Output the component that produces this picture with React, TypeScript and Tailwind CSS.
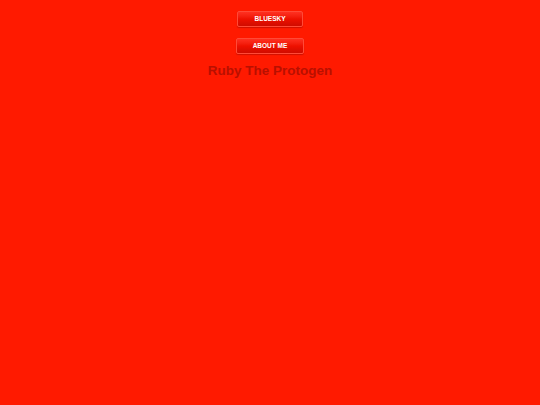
export default function App() {
  const btn =
    "h-[16px] px-[16px] flex items-center justify-center rounded-[2px] border border-[#ff4a38] bg-gradient-to-b from-[#ff3020] via-[#ee1000] to-[#d00c00] text-white font-bold text-[6.5px] leading-none shadow-[0_1px_1px_rgba(120,0,0,0.35)]";
  return (
    <div
      className="w-[540px] h-[405px] bg-[#ff1a00] flex flex-col items-center pt-[11px]"
      style={{ fontFamily: '"Liberation Sans", Arial, sans-serif' }}
    >
      <div className={btn}>BLUESKY</div>
      <div className={btn + " mt-[11px]"}>ABOUT ME</div>
      <h1 className="mt-[9px] text-[13.5px] leading-[16px] font-bold text-[#b81000]">
        Ruby The Protogen
      </h1>
    </div>
  );
}
